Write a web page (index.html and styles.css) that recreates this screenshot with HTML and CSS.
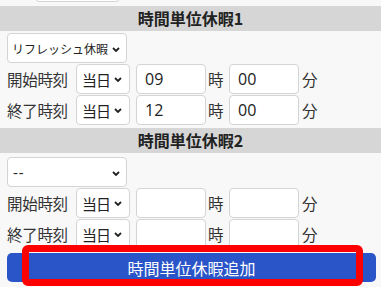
FILE: index.html
```html
<!DOCTYPE html>
<html lang="ja">
<head>
<meta charset="utf-8">
<title>時間単位休暇</title>
<link rel="stylesheet" href="styles.css">
</head>
<body>
<div class="page">
  <div class="stub-row"><div class="stub-input"></div></div>

  <div class="section-head">時間単位休暇1</div>
  <div class="section">
    <div class="type-row">
      <span class="sel-wrap wide">
        <select class="sel kind"><option>リフレッシュ休暇</option></select>
        <svg class="chev" viewBox="0 0 8 5" width="8" height="5"><path d="M1 1 L4 4 L7 1" fill="none" stroke="#222" stroke-width="1.8"/></svg>
      </span>
    </div>
    <div class="time-row">
      <span class="label">開始時刻</span>
      <span class="sel-wrap day">
        <select class="sel"><option>当日</option></select>
        <svg class="chev" viewBox="0 0 8 5" width="8" height="5"><path d="M1 1 L4 4 L7 1" fill="none" stroke="#222" stroke-width="1.8"/></svg>
      </span>
      <input class="num" type="text" value="09">
      <span class="unit hour">時</span>
      <input class="num" type="text" value="00">
      <span class="unit min">分</span>
    </div>
    <div class="time-row">
      <span class="label">終了時刻</span>
      <span class="sel-wrap day">
        <select class="sel"><option>当日</option></select>
        <svg class="chev" viewBox="0 0 8 5" width="8" height="5"><path d="M1 1 L4 4 L7 1" fill="none" stroke="#222" stroke-width="1.8"/></svg>
      </span>
      <input class="num" type="text" value="12">
      <span class="unit hour">時</span>
      <input class="num" type="text" value="00">
      <span class="unit min">分</span>
    </div>
  </div>

  <div class="section-head second">時間単位休暇2</div>
  <div class="section">
    <div class="type-row low">
      <span class="sel-wrap wide">
        <select class="sel dash"><option>--</option></select>
        <svg class="chev" viewBox="0 0 8 5" width="8" height="5"><path d="M1 1 L4 4 L7 1" fill="none" stroke="#222" stroke-width="1.8"/></svg>
      </span>
    </div>
    <div class="time-row">
      <span class="label">開始時刻</span>
      <span class="sel-wrap day">
        <select class="sel"><option>当日</option></select>
        <svg class="chev" viewBox="0 0 8 5" width="8" height="5"><path d="M1 1 L4 4 L7 1" fill="none" stroke="#222" stroke-width="1.8"/></svg>
      </span>
      <input class="num" type="text" value="">
      <span class="unit hour">時</span>
      <input class="num" type="text" value="">
      <span class="unit min">分</span>
    </div>
    <div class="time-row">
      <span class="label">終了時刻</span>
      <span class="sel-wrap day">
        <select class="sel"><option>当日</option></select>
        <svg class="chev" viewBox="0 0 8 5" width="8" height="5"><path d="M1 1 L4 4 L7 1" fill="none" stroke="#222" stroke-width="1.8"/></svg>
      </span>
      <input class="num" type="text" value="">
      <span class="unit hour">時</span>
      <input class="num" type="text" value="">
      <span class="unit min">分</span>
    </div>
    <div class="btn-row">
      <button class="add-btn" type="button">時間単位休暇追加</button>
      <div class="highlight"></div>
    </div>
  </div>
</div>
</body>
</html>
```

FILE: styles.css
```css
html, body {
  margin: 0;
  padding: 0;
  background: #f8f8f8;
  overflow: hidden;
}
body {
  font-family: "Noto Sans CJK JP", "Open Sans", sans-serif;
  color: #333;
  width: 381px;
  height: 287px;
}
.page {
  display: flex;
  flex-direction: column;
}
.stub-row {
  height: 3px;
  padding-left: 35px;
}
.stub-input {
  width: 85px;
  height: 29px;
  margin-top: -27px;
  box-sizing: border-box;
  background: #fff;
  border: 1px solid #d4d4d4;
  border-radius: 4px;
}
.section-head {
  margin-top: 3px;
  height: 25px;
  background: #d6d6d6;
  color: #222;
  font-weight: bold;
  font-size: 16px;
  line-height: 25px;
  text-align: center;
}
.section-head.second {
  margin-top: 3px;
}
.section {
  display: flex;
  flex-direction: column;
  gap: 1px;
  padding: 0 5px 0 7px;
}
.type-row {
  margin-top: 2px;
  display: flex;
}
.type-row.low {
  margin-top: 4px;
}
.time-row {
  display: flex;
  align-items: center;
  height: 30px;
}
.label {
  width: 64px;
  margin-right: 5px;
  font-size: 15.5px;
  letter-spacing: -0.3px;
  color: #333;
  white-space: nowrap;
}
.sel-wrap {
  position: relative;
  display: inline-block;
  height: 30px;
}
.sel-wrap.wide { width: 120px; }
.sel-wrap.day { width: 54px; margin-right: 6px; }
.sel {
  appearance: none;
  -webkit-appearance: none;
  width: 100%;
  height: 30px;
  box-sizing: border-box;
  background: #fff;
  border: 1px solid #d4d4d4;
  border-radius: 4px;
  padding: 0 0 0 4px;
  font-family: "Noto Sans CJK JP", sans-serif;
  font-size: 13px;
  color: #222;
}
.sel.kind {
  font-size: 12px;
  padding-left: 4px;
}
.sel.dash {
  font-family: "Open Sans", sans-serif;
  font-size: 15px;
  letter-spacing: 1px;
  padding-left: 5px;
}
.sel-wrap.day .sel {
  letter-spacing: -1px;
  padding-left: 5px;
  font-size: 15px;
}
.chev {
  position: absolute;
  right: 8px;
  top: 13px;
  pointer-events: none;
}
.sel-wrap.wide .chev { right: 7px; top: 14px; }
.num {
  width: 70px;
  height: 30px;
  box-sizing: border-box;
  background: #fff;
  border: 1px solid #d4d4d4;
  border-radius: 4px;
  padding: 0 8px;
  font-family: "Open Sans", "Noto Sans CJK JP", sans-serif;
  font-size: 16px;
  color: #222;
  margin: 0;
}
.unit {
  font-size: 15.5px;
  color: #333;
}
.unit.hour {
  width: 16px;
  margin: 0 5px 0 2px;
}
.unit.min {
  margin-left: 3px;
}
.btn-row {
  position: relative;
  margin-top: 3px;
}
.add-btn {
  display: block;
  width: 369px;
  height: 29px;
  border: none;
  border-radius: 5px;
  background: #2a55c8;
  color: #fff;
  font-family: "Noto Sans CJK JP", sans-serif;
  font-size: 16px;
  padding: 0;
  margin: 0;
}
.highlight {
  position: absolute;
  left: 15px;
  top: -8px;
  width: 341px;
  height: 41px;
  box-sizing: border-box;
  border: 7px solid #ff0000;
  border-radius: 6px;
  pointer-events: none;
}
```
